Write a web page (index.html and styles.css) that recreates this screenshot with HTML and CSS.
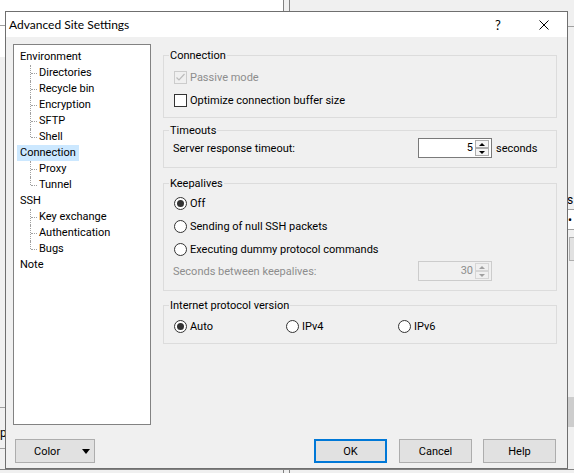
FILE: index.html
```html
<!DOCTYPE html>
<html>
<head>
    <title>Advanced Site Settings</title>
    <link rel="stylesheet" href="styles.css">
</head>
<body>
    <div class="desktop">
        <!-- main window lying behind the dialog -->
        <div class="backdrop">
            <div class="bd-left-pane"></div>
            <div class="bd-left-rule"></div>
            <div class="bd-split"></div>
            <div class="bd-right-rule"></div>
            <div class="bd-right-mid"></div>
            <span class="bd-right-label">s</span>
            <span class="bd-right-dot">&bull;</span>
            <div class="bd-right-btn"></div>
            <div class="bd-right-thumb"></div>
            <div class="bd-left-low"></div>
            <span class="bd-left-label">p</span>
            <div class="bd-bottom-rule"></div>
        </div>

        <div class="dialog">
            <div class="titlebar">
                <span class="title">Advanced Site Settings</span>
                <span class="caption-btn">?</span>
                <span class="caption-btn">
                    <svg width="10" height="10" viewBox="0 0 10 10">
                        <path d="M0.5 0.5 L9.5 9.5 M9.5 0.5 L0.5 9.5" stroke="#000" stroke-width="1" fill="none"/>
                    </svg>
                </span>
            </div>

            <div class="dialog-body">
                <div class="main">
                    <ul class="tree">
                        <li><span class="node">Environment</span>
                            <ul>
                                <li><span class="node">Directories</span></li>
                                <li><span class="node">Recycle bin</span></li>
                                <li><span class="node">Encryption</span></li>
                                <li><span class="node">SFTP</span></li>
                                <li><span class="node">Shell</span></li>
                            </ul>
                        </li>
                        <li><span class="node selected">Connection</span>
                            <ul>
                                <li><span class="node">Proxy</span></li>
                                <li><span class="node">Tunnel</span></li>
                            </ul>
                        </li>
                        <li><span class="node">SSH</span>
                            <ul>
                                <li><span class="node">Key exchange</span></li>
                                <li><span class="node">Authentication</span></li>
                                <li><span class="node">Bugs</span></li>
                            </ul>
                        </li>
                        <li><span class="node">Note</span></li>
                    </ul>

                    <div class="pages">
                        <fieldset class="group group-connection">
                            <legend>Connection</legend>
                            <div class="option disabled">
                                <span class="box checked">
                                    <svg width="11" height="11" viewBox="0 0 11 11">
                                        <path d="M1.5 5.5 L4 8 L9.5 2" stroke="#bcbcbc" stroke-width="1.2" fill="none"/>
                                    </svg>
                                </span>
                                Passive mode
                            </div>
                            <div class="option">
                                <span class="box"></span>
                                Optimize connection buffer size
                            </div>
                        </fieldset>

                        <fieldset class="group group-timeouts">
                            <legend>Timeouts</legend>
                            <div class="spin-row">
                                <span class="spin-label">Server response timeout:</span>
                                <div class="spin">
                                    <span class="spin-value">5</span>
                                    <span class="spin-arrows">
                                        <span class="arrow up"></span>
                                        <span class="arrow down"></span>
                                    </span>
                                </div>
                                <span class="unit">seconds</span>
                            </div>
                        </fieldset>

                        <fieldset class="group group-keepalives">
                            <legend>Keepalives</legend>
                            <div class="option"><span class="radio on"></span>Off</div>
                            <div class="option"><span class="radio"></span>Sending of null SSH packets</div>
                            <div class="option"><span class="radio"></span>Executing dummy protocol commands</div>
                            <div class="spin-row disabled">
                                <span class="spin-label">Seconds between keepalives:</span>
                                <div class="spin">
                                    <span class="spin-value">30</span>
                                    <span class="spin-arrows">
                                        <span class="arrow up"></span>
                                        <span class="arrow down"></span>
                                    </span>
                                </div>
                            </div>
                        </fieldset>

                        <fieldset class="group group-ip">
                            <legend>Internet protocol version</legend>
                            <div class="ip-options">
                                <div class="option"><span class="radio on"></span>Auto</div>
                                <div class="option"><span class="radio"></span>IPv4</div>
                                <div class="option"><span class="radio"></span>IPv6</div>
                            </div>
                        </fieldset>
                    </div>
                </div>

                <div class="footer">
                    <button class="btn btn-color">Color <span class="drop"></span></button>
                    <button class="btn btn-ok">OK</button>
                    <button class="btn btn-cancel">Cancel</button>
                    <button class="btn btn-help">Help</button>
                </div>
            </div>
        </div>
    </div>
</body>
</html>
```

FILE: styles.css
```css
* {
    box-sizing: border-box;
}

body {
    margin: 0;
    font-family: Roboto, "Liberation Sans", sans-serif;
    font-size: 11px;
    color: #000;
    background-color: #f0f0f0;
}

.desktop {
    position: relative;
    width: 574px;
    height: 473px;
    overflow: hidden;
}

/* ---- window behind ---- */

.backdrop div,
.backdrop span {
    position: absolute;
}

.bd-left-pane {
    left: 0;
    top: 0;
    width: 283px;
    height: 57px;
    background-color: #fff;
}

.bd-left-rule {
    left: 0;
    top: 25px;
    width: 283px;
    height: 1px;
    background-color: #a0a0a0;
}

.bd-split {
    left: 283px;
    top: 0;
    width: 7px;
    height: 473px;
    border-left: 1px solid #828282;
    border-right: 1px solid #828282;
}

.bd-right-rule {
    left: 290px;
    right: 0;
    top: 26px;
    height: 1px;
    background-color: #a0a0a0;
}

.bd-right-mid {
    left: 290px;
    right: 0;
    top: 209px;
    height: 21px;
    border-top: 1px solid #a0a0a0;
    border-bottom: 1px solid #a0a0a0;
    background-color: #fff;
}

.bd-right-label {
    left: 567px;
    top: 193px;
    font-size: 12px;
}

.bd-right-dot {
    left: 568px;
    top: 213px;
    font-size: 12px;
}

.bd-right-btn {
    left: 569px;
    top: 237px;
    width: 10px;
    height: 24px;
    border: 1px solid #adadad;
    background-color: #e1e1e1;
}

.bd-right-thumb {
    left: 568px;
    top: 397px;
    width: 10px;
    height: 30px;
    background-color: #cdcdcd;
}

.bd-left-low {
    left: 0;
    top: 407px;
    width: 5px;
    height: 42px;
    border-top: 1px solid #a0a0a0;
    border-bottom: 1px solid #a0a0a0;
}

.bd-left-label {
    left: 0;
    top: 426px;
    font-size: 12px;
}

.bd-bottom-rule {
    left: 0;
    right: 0;
    top: 469px;
    height: 1px;
    background-color: #828282;
}

/* ---- dialog ---- */

.dialog {
    position: absolute;
    left: 5px;
    top: 11px;
    width: 563px;
    height: 458px;
    border: 1px solid #6f6f6f;
    background-color: #f0f0f0;
    display: flex;
    flex-direction: column;
}

.titlebar {
    display: flex;
    align-items: center;
    height: 25px;
    background-color: #fff;
}

.title {
    flex: 1;
    padding-left: 3px;
    font-family: Lato, "Liberation Sans", sans-serif;
    font-size: 12px;
}

.caption-btn {
    width: 46px;
    height: 25px;
    display: flex;
    align-items: center;
    justify-content: center;
    font-family: Lato, "Liberation Sans", sans-serif;
    font-size: 13px;
}

.dialog-body {
    flex: 1;
    display: flex;
    flex-direction: column;
}

.main {
    display: flex;
    padding: 7px 10px 0 7px;
}

/* ---- page tree ---- */

.tree {
    list-style: none;
    margin: 0;
    padding: 4px 0 0 3px;
    width: 138px;
    height: 381px;
    flex: none;
    border: 1px solid #828282;
    background-color: #fff;
}

.tree li {
    line-height: 16px;
    white-space: nowrap;
}

.tree .node {
    display: inline-block;
    height: 16px;
    padding: 0 3px;
}

.tree .node.selected {
    background-color: #cce8ff;
}

.tree ul {
    list-style: none;
    margin: 0 0 0 13px;
    padding: 0;
}

.tree ul li {
    position: relative;
    padding-left: 6px;
}

.tree ul li::before {
    content: "";
    position: absolute;
    left: 0;
    top: 0;
    bottom: 0;
    border-left: 1px dotted #a0a0a0;
}

.tree ul li:last-child::before {
    bottom: 8px;
}

.tree ul li::after {
    content: "";
    position: absolute;
    left: 1px;
    top: 8px;
    width: 6px;
    border-top: 1px dotted #a0a0a0;
}

/* ---- option pages ---- */

.pages {
    flex: 1;
    margin-left: 12px;
    padding-top: 4px;
}

.group {
    margin: 0;
    padding: 0 0 0 10px;
    min-width: 0;
    border: 1px solid #dcdcdc;
}

.group legend {
    position: relative;
    top: 1px;
    margin-left: -5px;
    padding: 0 1px;
    line-height: 14px;
}

.group-connection {
    padding-top: 4px;
    padding-bottom: 5px;
}

.group-timeouts {
    margin-top: 5px;
    padding-top: 1px;
    padding-bottom: 9px;
}

.group-keepalives {
    margin-top: 8px;
    padding-top: 2px;
    padding-bottom: 9px;
}

.group-ip {
    margin-top: 7px;
    padding-top: 3px;
    padding-bottom: 5px;
}

.option {
    display: flex;
    align-items: center;
    height: 23px;
}

.disabled {
    color: #8d8d8d;
}

.box {
    width: 13px;
    height: 13px;
    margin-right: 3px;
    border: 1px solid #333;
    background-color: #fff;
    display: flex;
    align-items: center;
    justify-content: center;
}

.box.checked {
    border-color: #cccccc;
    background-color: #f0f0f0;
}

.radio {
    width: 13px;
    height: 13px;
    margin-right: 3px;
    border: 1px solid #333;
    border-radius: 50%;
    background-color: #fff;
    display: flex;
    align-items: center;
    justify-content: center;
}

.radio.on::after {
    content: "";
    width: 7px;
    height: 7px;
    border-radius: 50%;
    background-color: #333;
}

.ip-options {
    display: grid;
    grid-template-columns: 112px 112px 112px;
}

.spin-row {
    display: flex;
    align-items: center;
    height: 20px;
    margin-left: -1px;
}

.spin-label {
    width: 245px;
}

.spin {
    display: flex;
    width: 74px;
    height: 20px;
    border: 1px solid #7a7a7a;
    background-color: #fff;
}

.spin-value {
    flex: 1;
    text-align: right;
    padding-right: 2px;
    line-height: 18px;
}

.spin-arrows {
    display: flex;
    flex-direction: column;
    width: 14px;
    margin: 1px 2px 1px 0;
}

.arrow {
    flex: 1;
    border: 1px solid #adadad;
    background-color: #f5f5f5;
    display: flex;
    align-items: center;
    justify-content: center;
}

.arrow.up::after {
    content: "";
    border-left: 3px solid transparent;
    border-right: 3px solid transparent;
    border-bottom: 3px solid #000;
}

.arrow.down::after {
    content: "";
    border-left: 3px solid transparent;
    border-right: 3px solid transparent;
    border-top: 3px solid #000;
}

.disabled .spin {
    border-color: #cccccc;
    background-color: #f0f0f0;
}

.disabled .arrow {
    border-color: #d6d6d6;
    background-color: #f0f0f0;
}

.disabled .arrow.up::after {
    border-bottom-color: #a0a0a0;
}

.disabled .arrow.down::after {
    border-top-color: #a0a0a0;
}

.unit {
    margin-left: 4px;
}

/* ---- buttons ---- */

.footer {
    display: flex;
    padding: 14px 11px 0 9px;
}

.btn {
    width: 73px;
    height: 24px;
    padding: 0;
    font: inherit;
    color: #000;
    border: 1px solid #adadad;
    background-color: #e1e1e1;
}

.btn-color {
    width: 80px;
    margin-right: auto;
    display: flex;
    align-items: center;
    padding: 0 4px 0 18px;
}

.drop {
    margin-left: auto;
    border-left: 4px solid transparent;
    border-right: 4px solid transparent;
    border-top: 5px solid #000;
}

.btn-ok {
    border: 2px solid #0078d7;
}

.btn-cancel {
    margin-left: 12px;
}

.btn-help {
    margin-left: 11px;
}
```
